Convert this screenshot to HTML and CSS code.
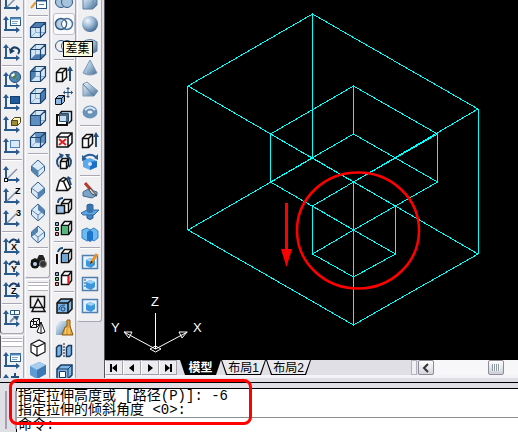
FILE: index.html
```
<!DOCTYPE html>
<html lang="zh-CN">
<head>
  <meta charset="UTF-8">
  <title>CAD</title>
  <link rel="stylesheet" href="styles.css">
</head>
<body>
  <!-- Icon shapes shared by the toolbars -->
  <svg class="defs" aria-hidden="true">
    <defs>
      <linearGradient id="steel" x1="0" y1="0" x2="1" y2="1">
        <stop offset="0" stop-color="#f4f9fd"/><stop offset="0.5" stop-color="#9dbad4"/><stop offset="1" stop-color="#41668b"/>
      </linearGradient>
      <linearGradient id="sky" x1="0" y1="0" x2="1" y2="1">
        <stop offset="0" stop-color="#e4f2fc"/><stop offset="1" stop-color="#6fa5d6"/>
      </linearGradient>
      <radialGradient id="ball" cx="0.35" cy="0.3" r="0.7">
        <stop offset="0" stop-color="#f0f7fc"/><stop offset="0.5" stop-color="#9fbcd6"/><stop offset="1" stop-color="#4a6f96"/>
      </radialGradient>
    </defs>
    <symbol id="axes" viewBox="0 0 20 20">
      <path d="M4 17V4M2 16h14" fill="none" stroke="#2a5a8c" stroke-width="2"/>
      <path d="M1 6l3-4 3 4zM14 13l4 3-4 3z" fill="#2a5a8c"/>
    </symbol>
    <symbol id="diag" viewBox="0 0 20 20"><path d="M5 15L15 5" stroke="#8292a4" stroke-width="1.5"/></symbol>
    <symbol id="pane" viewBox="0 0 20 20">
      <rect x="8.500" y="3.500" width="10" height="8" fill="#fff" stroke="#2a5a8c"/><path d="M8 4.500h11" stroke="#4f86bd" stroke-width="2"/><path d="M10 7.500h6M10 9.500h5" stroke="#7da7cf"/>
    </symbol>
    <symbol id="turn" viewBox="0 0 20 20">
      <path d="M7 7Q11 1 15 5" fill="none" stroke="#1b4068" stroke-width="2"/><path d="M13 7l5 0-1-5z" fill="#1b4068"/>
    </symbol>
    <symbol id="wire" viewBox="0 0 20 20">
      <path d="M2.500 7.500L7.500 2.500h10v10l-5 5h-10z" fill="#d3e6f6"/>
      <path d="M7.500 2.500v10h10M7.500 12.500l-5 5" fill="none" stroke="#8eb0d0"/>
    </symbol>
    <symbol id="edges" viewBox="0 0 20 20">
      <path d="M2.500 7.500L7.500 2.500h10v10l-5 5h-10zM2.500 7.500h10v10M12.500 7.500l5-5" fill="none" stroke="#1d4570" stroke-width="1.200"/>
    </symbol>
    <symbol id="iso" viewBox="0 0 20 20">
      <path d="M10 2l6.500 6v5L10 19l-6.500-6V8z" fill="#dcebf7" stroke="#315d89"/><path d="M3.500 8l6.500 5 6.500-5M10 13v6" fill="none" stroke="#5b86b0"/>
    </symbol>
    <symbol id="small" viewBox="0 0 20 20">
      <path d="M1.500 12.500l3-3h6v6l-3 3h-6z" fill="#8db9e2" stroke="#111"/><path d="M1.500 12.500h6v6M7.500 12.500l3-3" fill="none" stroke="#111"/>
    </symbol>
    <symbol id="keys" viewBox="0 0 20 20">
      <path d="M1.500 4.500h3v3h-3z" fill="#7fb3e6" stroke="#111"/><path d="M1.500 9.500h3v3h-3z" fill="#6bcb8b" stroke="#111"/><path d="M1.500 14.500h3v3h-3z" fill="#ef8b8b" stroke="#111"/>
    </symbol>
    <symbol id="right" viewBox="0 0 20 20">
      <path d="M7.500 7.500l3-4h7v9l-3 4h-7z" fill="#fff" stroke="#111" stroke-width="1.500"/><path d="M7.500 7.500h7v9M14.500 7.500l3-4" fill="none" stroke="#111" stroke-width="1.500"/>
    </symbol>
    <symbol id="rise" viewBox="0 0 20 20">
      <path d="M2.500 8.500l4-4h6v9l-4 4h-6z" fill="#fff" stroke="#111" stroke-width="1.500"/><path d="M2.500 8.500h6v9M8.500 8.500l4-4" fill="none" stroke="#111" stroke-width="1.500"/>
      <path d="M16 17V5" stroke="#234f7d" stroke-width="2"/><path d="M13 7l3-5 3 5z" fill="#234f7d"/>
    </symbol>
    <symbol id="sheet" viewBox="0 0 20 20">
      <rect x="2.500" y="3.500" width="15" height="13" fill="#e6f1fb" stroke="#4f7fae" stroke-width="1.500"/>
      <path d="M6 8l4-2 5 2v5l-4 3-5-2z" fill="#3d97dc"/><path d="M6 8l4-2 5 2-4 2z" fill="#9bd2f7"/>
    </symbol>
  </svg>

  <main class="workspace">
    <!-- UCS -->
    <div class="column">
      <div class="toolbar cut">
        <button type="button" title="UCS"><svg><use href="#axes"/><use href="#diag"/></svg></button>
        <button type="button" title="命名 UCS"><svg><use href="#axes"/><use href="#pane"/></svg></button>
        <hr>
        <button type="button" title="上一个 UCS"><svg><use href="#axes"/><path d="M9 8q2-4 6-2t1 6" fill="none" stroke="#1b4068" stroke-width="2"/><path d="M7 6l1 6 5-3z" fill="#1b4068"/></svg></button>
        <hr>
        <button type="button" title="世界 UCS"><svg><use href="#axes"/><circle cx="13" cy="7" r="5.500" fill="#4c87bf" stroke="#26496e"/><path d="M10 4l4-1 1 3-3 3-3-2zM14 9l3-1-2 3z" fill="#4f7f45"/><path d="M9 5l3-2 1 2-3 2z" fill="#fff"/></svg></button>
        <button type="button" title="对象 UCS"><svg><use href="#axes"/><rect x="8.500" y="4.500" width="9" height="7" fill="#1f5b9a" stroke="#123f70"/></svg></button>
        <button type="button" title="面 UCS"><svg><use href="#axes"/><path d="M9.500 6.500l3-3h6v5l-3 3h-6z" fill="#fbf4b6" stroke="#494426"/><path d="M9.500 6.500h6v5h-6z" fill="#9d8c31" stroke="#494426"/></svg></button>
        <button type="button" title="视图 UCS"><svg><use href="#axes"/><rect x="8.500" y="4.500" width="9" height="7" fill="#d8e9f8" stroke="#4f86bd"/></svg></button>
        <hr>
        <button type="button" title="原点 UCS"><svg><use href="#axes"/><use href="#diag"/><rect x="2.500" y="14.500" width="3" height="3" fill="#fff" stroke="#111"/></svg></button>
        <button type="button" title="Z 轴矢量 UCS"><svg><use href="#axes"/><use href="#diag"/><text x="13" y="8">Z</text></svg></button>
        <button type="button" title="三点 UCS"><svg><use href="#axes"/><use href="#diag"/><text x="14" y="8">3</text></svg></button>
        <hr>
        <button type="button" title="X"><svg><use href="#axes"/><use href="#turn"/><text x="9" y="14">X</text></svg></button>
        <button type="button" title="Y"><svg><use href="#axes"/><use href="#turn"/><text x="9" y="14">Y</text></svg></button>
        <button type="button" title="Z"><svg><use href="#axes"/><use href="#turn"/><text x="9" y="14">Z</text></svg></button>
        <hr>
        <button type="button" title="应用 UCS"><svg><use href="#axes"/><path d="M8.500 2.500h9v4h-9zM12.500 2.500v4" fill="#fff" stroke="#2a5a8c"/><path d="M8 14l5-5" stroke="#8292a4" stroke-width="2"/><path d="M11 8h6l-2 5z" fill="#2a5a8c"/></svg></button>
      </div>
      <div class="toolbar grip">
        <button type="button" title="显示 UCS 对话框"><svg><use href="#axes"/><use href="#pane"/></svg></button>
        <button type="button" title="移动 UCS"><svg><use href="#axes"/><path d="M13 1v8M9 5h8" stroke="#234f7d" stroke-width="2"/></svg></button>
      </div>
    </div>

    <!-- Views and shading -->
    <div class="column">
      <div class="toolbar cut">
        <button type="button" title="命名视图"><svg><rect x="8.500" y="7.500" width="10" height="9" fill="#fff" stroke="#234f7d"/><path d="M8 8.500h11" stroke="#234f7d" stroke-width="2"/><path d="M11 12.500h5" stroke="#4f86bd"/><path d="M3 16l5-6" stroke="#e09a32" stroke-width="2"/></svg></button>
        <hr>
        <button type="button" title="俯视"><svg><use href="#wire"/><path d="M2.500 7.500l5-5h10l-5 5z" fill="#4d7fb2"/><use href="#edges"/></svg></button>
        <button type="button" title="仰视"><svg><use href="#wire"/><path d="M2.500 17.500l5-5h10l-5 5z" fill="#4d7fb2"/><use href="#edges"/></svg></button>
        <button type="button" title="左视"><svg><use href="#wire"/><path d="M2.500 17.500v-10l5-5v10z" fill="#4d7fb2"/><use href="#edges"/></svg></button>
        <button type="button" title="右视"><svg><use href="#wire"/><path d="M12.500 17.500v-10l5-5v10z" fill="#4d7fb2"/><use href="#edges"/></svg></button>
        <button type="button" title="主视"><svg><use href="#wire"/><path d="M2.500 7.500h10v10h-10z" fill="#5f8fc0"/><use href="#edges"/></svg></button>
        <button type="button" title="后视"><svg><use href="#wire"/><path d="M7.500 2.500h10v10h-10z" fill="#5f8fc0"/><use href="#edges"/></svg></button>
        <hr>
        <button type="button" title="西南等轴测"><svg><use href="#iso"/><path d="M3.500 8l6.500 5v6l-6.500-6z" fill="#5483b2"/></svg></button>
        <button type="button" title="东南等轴测"><svg><use href="#iso"/><path d="M16.500 8L10 13v6l6.500-6z" fill="#5483b2"/></svg></button>
        <button type="button" title="东北等轴测"><svg><use href="#iso"/><path d="M10 2l6.500 6v5L10 8z" fill="#5483b2"/></svg></button>
        <button type="button" title="西北等轴测"><svg><use href="#iso"/><path d="M10 2L3.500 8v5L10 8z" fill="#5483b2"/></svg></button>
        <hr>
        <button type="button" title="相机"><svg><path d="M3 8l4-2 2 1 2-4h4l2 4v7H3z" fill="#222"/><circle cx="7" cy="12" r="4.500" fill="#111"/><circle cx="7" cy="12" r="2" fill="#bcd1e5"/><circle cx="15" cy="12" r="3.500" fill="#333" stroke="#888"/></svg></button>
      </div>
      <div class="toolbar grip">
        <button type="button" title="二维线框"><svg><path d="M2.500 2.500h14v11h-14zM10 5l7 12.500H4z" fill="none" stroke="#111" stroke-width="1.500"/></svg></button>
        <button type="button" title="三维线框"><svg><path d="M2.500 5.500l3-3h6v6l-3 3h-6zM2.500 5.500h6v6M8.500 5.500l3-3M5.500 2.500v6h6M5.500 8.500l-3 3" fill="none" stroke="#111"/><path d="M13 6l4 10q-4 3-8 0z" fill="#fff" stroke="#111"/><path d="M13 6v12" stroke="#111"/></svg></button>
        <button type="button" title="消隐"><svg><path d="M3 6l8-4 6 3v9l-8 4-6-4zM3 6l6 3 8-4M9 9v9" fill="#fff" stroke="#111" stroke-width="1.200"/></svg></button>
        <button type="button" title="平面着色"><svg><path d="M2 6l9-4 7 3v9l-9 5-7-4z" fill="#5f9bd3"/><path d="M2 6l9-4 7 3-9 5z" fill="#a5cdee"/><path d="M9 10l9-5v9l-9 5z" fill="#3b78b4"/></svg></button>
      </div>
    </div>

    <!-- Solids editing -->
    <div class="column">
      <div class="toolbar cut">
        <button type="button" title="并集"><svg><circle cx="7" cy="10" r="5.500" fill="#a7c4de" stroke="#2d5a87"/><circle cx="13" cy="10" r="5.500" fill="#a7c4de" stroke="#2d5a87"/></svg></button>
        <button type="button" class="hot" aria-describedby="tip"><svg><circle cx="13" cy="10" r="5.500" fill="#f3f7fb" stroke="#47729c" stroke-width="1.500"/><circle cx="7" cy="10" r="5.500" fill="#b5cee4" stroke="#2d5a87" stroke-width="1.500"/><path d="M10 5.500q-5 4.500 0 9 5-4.500 0-9z" fill="#fff" stroke="#2d5a87"/></svg><span class="tooltip" id="tip" role="tooltip">差集</span></button>
        <button type="button" title="交集"><svg><circle cx="7" cy="10" r="5.500" fill="none" stroke="#2d5a87"/><circle cx="13" cy="10" r="5.500" fill="none" stroke="#2d5a87"/></svg></button>
        <hr>
        <button type="button" title="拉伸面"><svg><use href="#rise"/></svg></button>
        <button type="button" title="移动面"><svg><use href="#small"/><path d="M14 2v9M9.500 6.500h9" stroke="#234f7d"/><path d="M12 3l2-2 2 2zM12 10l2 2 2-2zM11 4.500l-2 2 2 2zM17 4.500l2 2-2 2z" fill="#234f7d"/></svg></button>
        <button type="button" title="偏移面"><svg><path d="M5.500 6.500l2-3h10v9l-3 3" fill="#e1effb" stroke="#111" stroke-width="1.500"/><path d="M3 7h10v10H3z" fill="#fff" stroke="#111" stroke-width="2"/><path d="M5.500 13.500v-8h9v8z" fill="#8db9e2" fill-opacity="0.500" stroke="#234f7d"/></svg></button>
        <button type="button" title="删除面"><svg><path d="M3 7l4-4h11v10l-4 4H3zM3 7h11v10M14 7l4-4" fill="#f2f7fc" stroke="#111" stroke-width="1.500"/><path d="M5 9l7 6M12 9l-7 6" stroke="#e02020" stroke-width="2"/></svg></button>
        <button type="button" title="旋转面"><svg><path d="M6.500 9.500l2-3h6v7l-2 3h-6zM6.500 9.500h6v7M12.500 9.500l2-3" fill="#fff" stroke="#111" stroke-width="1.500"/><path d="M5 15Q0 8 7 4M15 15q5-7-2-11" fill="none" stroke="#234f7d" stroke-width="2"/><path d="M5 1l5 2-3 4zM11 2l5 0-2 5z" fill="#234f7d"/></svg></button>
        <button type="button" title="倾斜面"><svg><path d="M2.500 16.500l3-10 4-3 3 1 4 9-3 3zM5.500 6.500l4 1 4 9M9.500 7.500l3-3" fill="#fff" stroke="#111" stroke-width="1.500"/><path d="M17 11l-2-6" stroke="#234f7d" stroke-width="2"/><path d="M12 6l2-4 4 3z" fill="#234f7d"/></svg></button>
        <button type="button" title="复制面"><svg><use href="#right"/><path d="M2.500 9.500h8v8h-8z" fill="#9ac1e5" stroke="#111" stroke-width="1.500"/><path d="M4 7q0-5 5-5" fill="none" stroke="#234f7d" stroke-width="2"/></svg></button>
        <button type="button" title="着色面"><svg><use href="#keys"/><use href="#right"/><path d="M8 8h6v8H8z" fill="#54b77a"/></svg></button>
        <hr>
        <button type="button" title="复制边"><svg><use href="#right"/><path d="M8 8h6v8H8z" fill="#6fa5d6"/><path d="M3 8v10" stroke="#111" stroke-width="2"/><path d="M4 6q1-4 5-4" fill="none" stroke="#234f7d" stroke-width="2"/></svg></button>
        <button type="button" title="着色边"><svg><use href="#keys"/><use href="#right"/><path d="M14.500 8v8" stroke="#e02020" stroke-width="2"/></svg></button>
        <hr>
        <button type="button" title="压印"><svg><path d="M3 7l4-4h11v10l-4 4H3z" fill="#7fb5e4" stroke="#111" stroke-width="1.500"/><path d="M3 7h11v10M14 7l4-4" fill="none" stroke="#111" stroke-width="1.500"/><circle cx="9" cy="13" r="2" fill="none" stroke="#164475"/><path d="M5 14q0-5 6-5" fill="none" stroke="#164475"/></svg></button>
        <button type="button" title="清除"><svg><path d="M2 8l4-5h9v9l-4 5H2z" fill="url(#steel)"/><path d="M13 2h3v6l3 9H8l3-8 2-1z" fill="#e3a233" stroke="#8e5c17"/><path d="M12 10l-1 6M15 10v6" stroke="#fbe19b"/></svg></button>
        <button type="button" title="分割"><svg><path d="M2.500 7.500l2-2h3v9l-2 2h-3zM12.500 7.500l2-2h3v9l-2 2h-3z" fill="#7fb5e4" stroke="#173c63" stroke-width="1.500"/><path d="M10 3v15" stroke="#111" stroke-dasharray="2 1"/></svg></button>
        <button type="button" title="抽壳"><svg><path d="M3 7l4-4h11v10l-4 4H3z" fill="#7fb5e4" stroke="#173c63" stroke-width="1.500"/><path d="M3 7h11v10M14 7l4-4" fill="none" stroke="#173c63"/><path d="M5.500 9.500h6v6h-6z" fill="#fff" stroke="#173c63"/></svg></button>
      </div>
    </div>

    <!-- Solids -->
    <div class="column">
      <div class="toolbar cut">
        <button type="button" title="长方体"><svg><path d="M3 7l4-4h10v10l-4 4H3z" fill="url(#steel)" stroke="#5b7ea2"/><path d="M3 7h10v10M13 7l4-4" fill="none" stroke="#6f90b0"/></svg></button>
        <button type="button" title="球体"><svg><circle cx="10" cy="10" r="8" fill="url(#ball)"/></svg></button>
        <button type="button" title="圆柱体"><svg><path d="M3 6q7-5 14 0v9q-7 5-14 0z" fill="url(#steel)" stroke="#5b7ea2"/></svg></button>
        <button type="button" title="圆锥体"><svg><path d="M10 2l7 13q-7 4-14 0z" fill="url(#steel)" stroke="#7c98b3"/></svg></button>
        <button type="button" title="楔体"><svg><path d="M3 4l4-2 11 9-4 5H3z" fill="url(#steel)" stroke="#7c98b3"/><path d="M3 4l11 12" stroke="#547a9f"/></svg></button>
        <button type="button" title="圆环"><svg><ellipse cx="10" cy="10" rx="5" ry="4" fill="none" stroke="#6a93ba" stroke-width="5"/><path d="M5 8q5-5 10 0" fill="none" stroke="#d9e8f4" stroke-width="2"/></svg></button>
        <hr>
        <button type="button" title="拉伸"><svg><use href="#rise"/></svg></button>
        <button type="button" title="旋转"><svg><path d="M3 8l7-2 7 3v6l-7 3-7-3z" fill="#5ba9e8"/><path d="M10 10l7-1v6l-7 3z" fill="#1e6fc4"/><circle cx="10" cy="12" r="2" fill="#cbe7fb"/><path d="M3 6q6-6 13-1" fill="none" stroke="#295f96" stroke-width="2"/><path d="M2 3l0 6 5-2zM14 6l4-4v6z" fill="#295f96"/></svg></button>
        <hr>
        <button type="button" title="剖切"><svg><path d="M3 12l5-3 9 3v3l-5 3-9-2z" fill="#7ba3c9" stroke="#446b91"/><path d="M5 3l7 8" stroke="#b33c2c" stroke-width="3"/><path d="M10 8l7 8-5-2-3-4z" fill="#ddd" stroke="#444"/></svg></button>
        <button type="button" title="切割"><svg><path d="M7 3q3-2 6 0v13q-3 3-6 0z" fill="#4687c6" stroke="#265b91"/><path d="M1 11l6-3h12l-5 5H3z" fill="#5ca5e2" stroke="#2f6da8"/><path d="M7 3v7q3 2 6 0V3" fill="#3b74ad"/></svg></button>
        <button type="button" title="干涉"><svg><path d="M2 6l5-2 3 2 4-2 4 3v7l-4 3-3-2-4 2-5-3z" fill="#6dbaf0" stroke="#3b81bd"/><path d="M10 6l3 2v8l-3 2-3-2V8z" fill="#1e74c8"/></svg></button>
        <hr>
        <button type="button" title="设置图形"><svg><use href="#sheet"/><path d="M11 11l6-9" stroke="#e8912a" stroke-width="3"/><path d="M10 12l1-3 2 1z" fill="#222"/></svg></button>
        <button type="button" title="设置视图"><svg><use href="#sheet"/><path d="M4 6h2M4 9h2M4 12h2" stroke="#234f7d"/></svg></button>
        <button type="button" title="设置轮廓"><svg><use href="#sheet"/></svg></button>
      </div>
    </div>

    <section class="viewport">
      <div class="model">
        <svg class="drawing" viewBox="105 0 413 360" role="img" aria-label="三维模型">
          <g class="cyan">
            <path d="M312.500 14L188 86l165.500 96L478 109zM312.500 158L188 230l165.500 95L478 254zM312.500 14v144M187.500 86v144M353.500 182v143M478.500 109v145"/>
            <path d="M353.500 86L270.500 134l83 48 84-48zM353.500 134l-83 48 83 48 84-48zM353.500 86v48M270.500 134v48M437.500 134v48"/>
            <path d="M353.500 182l-41 24 41 24 42-24zM353.500 230l-41 24 41 23 42-23zM312.500 206v48M395.500 206v48"/>
          </g>
          <ellipse cx="358" cy="230.500" rx="61" ry="58" fill="none" stroke="#f00" stroke-width="2.500"/>
          <path d="M286.500 203v48" stroke="#f00" stroke-width="3"/>
          <path d="M281 249h11l-5.500 18z" fill="#f00"/>
          <g class="ucs">
            <path d="M155.500 313v36M155.500 349L124 332M155.500 349l32-17M132 332l-8 0 5 6zM179 332h8l-5 6zM150 349l5.500-3 5.500 3-5.500 3z"/>
            <text x="151" y="306">Z</text>
            <text x="111" y="332">Y</text>
            <text x="193" y="332">X</text>
          </g>
        </svg>
      </div>
      <div class="layouts">
        <div class="pager">
          <button type="button" title="第一个"><svg viewBox="0 0 16 12"><path d="M4 2h2v8H4zM11 2v8L6 6z"/></svg></button>
          <button type="button" title="上一个"><svg viewBox="0 0 16 12"><path d="M10 2v8L5 6z"/></svg></button>
          <button type="button" title="下一个"><svg viewBox="0 0 16 12"><path d="M6 2v8l5-4z"/></svg></button>
          <button type="button" title="最后一个"><svg viewBox="0 0 16 12"><path d="M5 2v8l5-4zM10 2h2v8h-2z"/></svg></button>
        </div>
        <div class="tabs">
          <button type="button" class="tab active">模型</button>
          <button type="button" class="tab">布局1</button>
          <button type="button" class="tab">布局2</button>
        </div>
        <div class="scroll">
          <span class="split"></span>
          <button type="button" title="向左滚动"><svg viewBox="0 0 16 12"><path d="M9 2L5 6l4 4" fill="none" stroke="#333" stroke-width="2"/></svg></button>
          <div class="track"><span class="thumb"></span></div>
        </div>
      </div>
    </section>
  </main>

  <!-- Command window -->
  <section class="command">
    <div class="lines">
      <p>指定拉伸高度或 [路径(P)]: -6</p>
      <p>指定拉伸的倾斜角度 &lt;0&gt;:</p>
      <div class="prompt">
        <label for="cmd">命令:</label>
        <input type="text" id="cmd">
      </div>
    </div>
    <div class="mark"></div>
  </section>
</body>
</html>
```
FILE: styles.css
```
* {
  box-sizing: border-box;
}
body {
  margin: 0;
  height: 100vh;
  display: flex;
  flex-direction: column;
  overflow: hidden;
  background-color: #e0dfe5;
  font-family: "Liberation Sans", "Noto Sans CJK SC", sans-serif;
  font-size: 12px;
}
button {
  padding: 0;
  border: none;
  background: none;
  font: inherit;
}
.defs {
  position: absolute;
  width: 0;
  height: 0;
}

/* Workspace */
.workspace {
  flex: 1;
  min-height: 0;
  display: flex;
  gap: 1px;
  overflow: hidden;
}
.column {
  flex: none;
  width: 25px;
  display: flex;
  flex-direction: column;
  gap: 1px;
}
.column:first-child {
  width: 24px;
}

/* Toolbars */
.toolbar {
  display: flex;
  flex-direction: column;
  align-items: center;
  padding-bottom: 4px;
  background-color: #f0eff2;
  border-left: 1px solid #fff;
  border-right: 1px solid #a9a7b3;
  border-bottom: 1px solid #a9a7b3;
  border-radius: 0 0 3px 3px;
}
.column:first-child .toolbar {
  border-left-color: #55535c;
}
.toolbar.cut {
  margin-top: -9px;
}
.toolbar.grip {
  border-top: 1px solid #fff;
}
.toolbar.grip::before {
  content: "";
  width: 20px;
  height: 7px;
  margin: 2px 0;
  border: 1px solid #b4b2bd;
  border-width: 1px 0;
  background: linear-gradient(#fff 2px, #b4b2bd 2px, #b4b2bd 3px, #fff 3px);
}
.toolbar button {
  position: relative;
  flex: none;
  width: 22px;
  height: 22px;
  display: flex;
  align-items: center;
  justify-content: center;
}
.toolbar button > svg {
  flex: none;
  width: 20px;
  height: 20px;
}
.toolbar text {
  font: bold 9px "Liberation Sans", sans-serif;
}
.toolbar hr {
  flex: none;
  width: 20px;
  height: 2px;
  margin: 2px 0;
  border: none;
  border-top: 1px solid #a9a7b3;
  border-bottom: 1px solid #fff;
}
.toolbar .hot {
  background-color: #fafafc;
  border: 1px solid #c3c1cb;
  border-radius: 3px;
}
.tooltip {
  position: absolute;
  top: 27px;
  left: 9px;
  z-index: 2;
  padding: 0 2px;
  border: 1px solid #000;
  background-color: #ffffe1;
  font-size: 12px;
  line-height: 14px;
  white-space: nowrap;
}

/* Drawing area */
.viewport {
  flex: 1;
  min-width: 0;
  margin-left: 1px;
  display: flex;
  flex-direction: column;
  border-left: 1px solid #55535c;
}
.model {
  flex: 1;
  min-height: 0;
  overflow: hidden;
  background-color: #000;
}
.drawing {
  display: block;
  width: 100%;
  height: 100%;
}
.cyan path {
  fill: none;
  stroke: #0ff;
  shape-rendering: crispEdges;
}
.ucs path {
  fill: none;
  stroke: #fff;
}
.ucs text {
  fill: #fff;
  font-size: 13px;
}

/* Layout tabs */
.layouts {
  flex: none;
  height: 18px;
  display: flex;
  border-bottom: 3px solid #f4f3f7;
}
.pager {
  display: flex;
}
.pager button {
  width: 18px;
  border: 1px solid #a3a1ad;
  border-left-color: #fff;
  background-color: #ececf0;
}
.layouts svg {
  display: block;
  width: 16px;
  height: 12px;
}
.tabs {
  display: flex;
  padding-left: 3px;
}
.tab {
  position: relative;
  z-index: 0;
  width: 45px;
  line-height: 14px;
}
.tab::before,
.tab::after {
  content: "";
  position: absolute;
  z-index: -1;
  inset: 0;
  background-color: #000;
  clip-path: polygon(0 0, 100% 0, calc(100% - 5px) 100%, 5px 100%);
}
.tab::after {
  inset: 0 1px 1px;
  background-color: #e9e8ed;
}
.tab.active {
  width: 41px;
  color: #fff;
  font-weight: bold;
}
.tab.active::after {
  background-color: #000;
}
.scroll {
  width: 107px;
  margin-left: auto;
  display: flex;
}
.split {
  width: 6px;
  margin-right: 1px;
  border: 1px solid #b4b2bd;
  background-color: #f0eff2;
}
.scroll button {
  width: 16px;
  border: 1px solid #8d8b97;
  border-radius: 2px;
  background: linear-gradient(#fff, #d5d4dd);
}
.track {
  flex: 1;
  display: flex;
  justify-content: flex-end;
  padding-right: 14px;
  background-color: #f7f7fa;
}
.thumb {
  width: 16px;
  border: 1px solid #8d8b97;
  border-radius: 2px;
  padding: 3px;
  background: repeating-linear-gradient(90deg, #8b99ab 0 1px, #fff 1px 2px) content-box, linear-gradient(#fff, #cfced9);
}

/* Command window */
.command {
  position: relative;
  flex: none;
  margin-top: 4px;
  padding: 5px 0 0 16px;
  border-top: 1px solid #000;
}
.command::before {
  content: "";
  position: absolute;
  top: 8px;
  bottom: 3px;
  left: 5px;
  width: 8px;
  border: 1px solid #a3a1ad;
  border-width: 0 2px;
}
.lines {
  border-top: 1px solid #000;
  border-left: 1px solid #000;
  background-color: #fff;
  font-family: "Liberation Mono", "Noto Sans CJK SC", monospace;
  font-size: 14px;
  line-height: 14px;
}
.lines p {
  margin: 0;
  padding-left: 1px;
  white-space: nowrap;
}
.prompt {
  display: flex;
  border-top: 1px solid #8f8f8f;
}
.prompt label {
  padding-left: 1px;
}
.prompt input {
  flex: 1;
  min-width: 0;
  height: 14px;
  padding: 0;
  border: none;
  outline: none;
  font: inherit;
}

/* Highlight around the last answers */
.mark {
  position: absolute;
  top: -4px;
  left: 9px;
  width: 243px;
  height: 46px;
  border: 3px solid #f00;
  border-radius: 8px;
}
```
